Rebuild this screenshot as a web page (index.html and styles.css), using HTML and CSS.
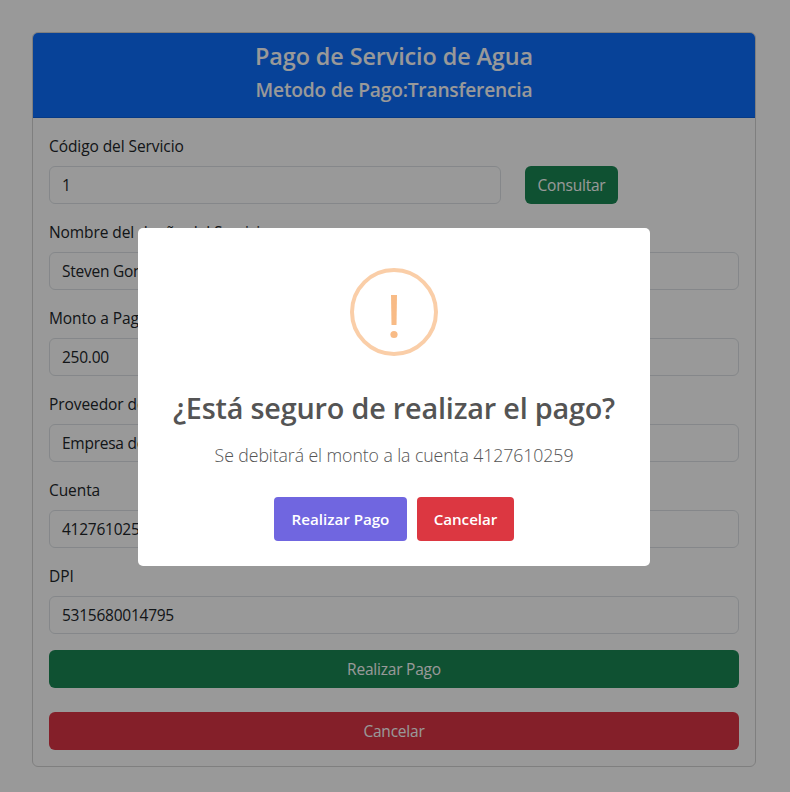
FILE: index.html
```html
<!DOCTYPE html>
<html lang="es">
<head>
<meta charset="utf-8">
<title>Pago de Servicio de Agua</title>
<link rel="stylesheet" href="styles.css">
</head>
<body>
<main class="page">
  <section class="card">
    <header class="card-header">
      <h4>Pago de Servicio de Agua</h4>
      <h5>Metodo de Pago:Transferencia</h5>
    </header>
    <form class="card-body">
      <div class="field">
        <label>Código del Servicio</label>
        <div class="row">
          <div class="control">1</div>
          <div><button type="button" class="btn success">Consultar</button></div>
        </div>
      </div>
      <div class="field"><label>Nombre del dueño del Servicio</label><div class="control">Steven Gonzalez</div></div>
      <div class="field"><label>Monto a Pagar</label><div class="control">250.00</div></div>
      <div class="field"><label>Proveedor de</label><div class="control">Empresa de Agua</div></div>
      <div class="field"><label>Cuenta</label><div class="control">4127610259</div></div>
      <div class="field"><label>DPI</label><div class="control">5315680014795</div></div>
      <div class="actions">
        <button type="button" class="btn success">Realizar Pago</button>
        <button type="button" class="btn danger">Cancelar</button>
      </div>
    </form>
  </section>
</main>
<div class="backdrop">
  <div class="modal" role="dialog">
    <svg class="icon" viewBox="0 0 88 88" width="88" height="88">
      <circle cx="44" cy="44" r="42" fill="none" stroke="#facea8" stroke-width="4"/>
      <path d="M41 27h6l-.5 30h-5z" fill="#f8bb86"/>
      <circle cx="44" cy="66.5" r="3.6" fill="#f8bb86"/>
    </svg>
    <h2>¿Está seguro de realizar el pago?</h2>
    <p>Se debitará el monto a la cuenta 4127610259</p>
    <div class="modal-actions">
      <button type="button" class="confirm">Realizar Pago</button>
      <button type="button" class="cancel">Cancelar</button>
    </div>
  </div>
</div>
</body>
</html>
```

FILE: styles.css
```css
* { box-sizing: border-box; }
body {
  margin: 0;
  height: 792px;
  overflow: hidden;
  background: #fff;
  color: #212529;
  font: 400 15.5px/24px "Open Sans", "Noto Sans", sans-serif;
  letter-spacing: -.08px;
}
button { font: inherit; letter-spacing: inherit; border: 0; margin: 0; white-space: nowrap; }
.page { width: 788px; padding: 32px; }
.card { border: 1px solid #d4d4d4; border-radius: 6px; height: 735px; overflow: hidden; }
.card-header {
  background: #0d6efd;
  color: #fff;
  text-align: center;
  padding: 8px 16px;
  height: 85px;
  border-bottom: 1px solid #0b61df;
}
h4, h5, h2, p { margin: 0; }
h4 { font-size: 23.4px; line-height: 30px; margin-bottom: 7px; font-weight: 600; letter-spacing: -.1px; }
h5 { font-size: 19.2px; line-height: 24px; font-weight: 600; letter-spacing: -.2px; }
.card-body { padding: 16px; }
.field { margin-bottom: 16px; }
label { display: block; margin-bottom: 8px; }
.control {
  height: 38px;
  border: 1px solid #dee2e6;
  border-radius: 6px;
  padding: 6px 12px;
  letter-spacing: -.25px;
}
.row { display: grid; grid-template-columns: 452px 1fr; gap: 24px; }
.btn { height: 38px; border-radius: 6px; color: #fff; padding: 0; letter-spacing: -.22px; }
.row .btn { width: 93px; }
.success { background: #198754; }
.danger { background: #dc3545; }
.actions { display: grid; gap: 24px; }
.backdrop {
  position: fixed;
  inset: 0;
  padding: 228px 0 0 138px;
  background: rgba(0, 0, 0, .4);
}
.modal {
  width: 512px;
  height: 338px;
  border-radius: 5px;
  background: #fff;
  color: #545454;
  display: flex;
  flex-direction: column;
  align-items: center;
  padding-top: 40px;
}
.icon { display: block; flex: none; }
h2 { margin-top: 34px; font-size: 28.8px; line-height: 36px; font-weight: 550; letter-spacing: -.2px; white-space: nowrap; }
p { margin-top: 15px; font-size: 17.7px; line-height: 28px; font-weight: 360; letter-spacing: -.08px; white-space: nowrap; }
.modal-actions { display: flex; gap: 10px; margin-top: 28px; }
.modal-actions button { height: 44px; border-radius: 4px; color: #fff; font-weight: 600; font-size: 15.2px; padding: 0; letter-spacing: -.03px; }
.confirm { width: 133px; background: #7066e0; }
.cancel { width: 97px; background: #dc3741; }
```
